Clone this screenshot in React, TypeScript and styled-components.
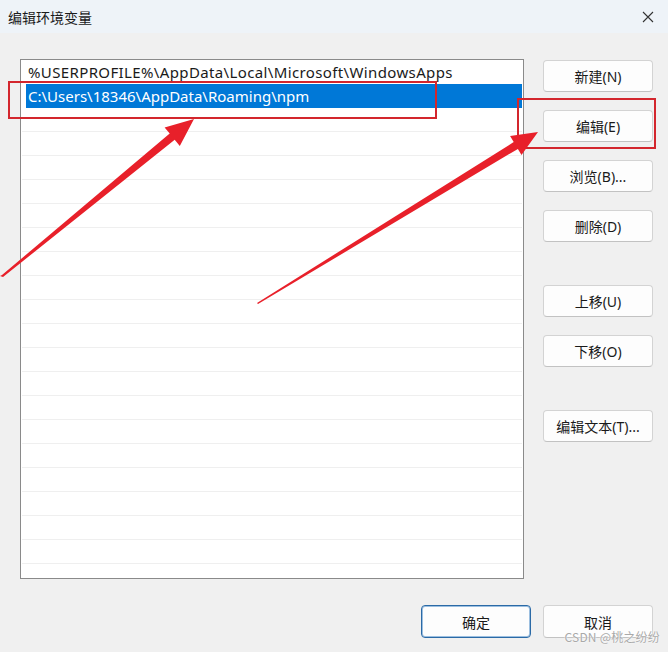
import React from "react";
import styled, { createGlobalStyle } from "styled-components";

const GlobalStyle = createGlobalStyle`
  html, body { margin: 0; padding: 0; background: #f0f0f0; }
  body { font-family: "Noto Sans", "Noto Sans CJK SC", sans-serif; }
  * { box-sizing: border-box; }
`;

const Window = styled.div`
  position: relative;
  width: 668px;
  height: 652px;
  background: #f0f0f0;
  display: flex;
  flex-direction: column;
  overflow: hidden;
`;

const TitleBar = styled.div`
  height: 33px;
  background: #eef3f8;
  display: flex;
  align-items: center;
  justify-content: space-between;
  padding: 0 14px 0 8px;
  font-family: "Noto Sans CJK SC", sans-serif;
  font-size: 14px;
  color: #1b1b1b;
`;

const Body = styled.div`
  flex: 1;
  display: flex;
  flex-direction: column;
  padding: 26px 15px 0 20px;
`;

const Main = styled.div`
  display: flex;
  gap: 19px;
`;

const ListBox = styled.div`
  width: 504px;
  height: 520px;
  border: 1px solid #8a8a8a;
  background: #ffffff;
  overflow: hidden;
  padding: 0 1px 0 5px;
`;

const Row = styled.div<{ $selected?: boolean; $empty?: boolean; $wide?: boolean }>`
  height: 24px;
  line-height: 24px;
  padding-left: 2px;
  font-size: 15px;
  white-space: nowrap;
  letter-spacing: ${(p) => (p.$wide ? "0.37px" : "0")};
  background: ${(p) => (p.$selected ? "#0078d7" : "transparent")};
  color: ${(p) => (p.$selected ? "#ffffff" : "#1a1a1a")};
  border-bottom: ${(p) => (p.$empty ? "1px solid #efefef" : "none")};
  margin-left: ${(p) => (p.$empty ? "-4px" : "0")};
`;

const ButtonColumn = styled.div`
  display: flex;
  flex-direction: column;
  padding-top: 1px;
`;

const Btn = styled.button<{ $gap?: number; $primary?: boolean }>`
  width: 110px;
  height: 32px;
  margin-top: ${(p) => p.$gap ?? 0}px;
  background: #fdfdfd;
  border: 1px solid ${(p) => (p.$primary ? "#2b6aa6" : "#d3d3d3")};
  border-bottom-color: ${(p) => (p.$primary ? "#2b6aa6" : "#c2c2c2")};
  border-radius: 4px;
  font-family: "Noto Sans", "Noto Sans CJK SC", sans-serif;
  font-size: 14px;
  color: #1a1a1a;
  padding: 0;
  box-shadow: ${(p) => (p.$primary ? "inset 0 0 0 1px #9cbfe0" : "none")};
`;

const Footer = styled.div`
  display: flex;
  justify-content: flex-end;
  gap: 12px;
  margin-top: 26px;
`;

const FooterBtn = styled(Btn)`
  height: 33px;
`;

const Overlay = styled.svg`
  position: absolute;
  left: 0;
  top: 0;
  pointer-events: none;
`;

const Watermark = styled.div`
  position: absolute;
  right: 8px;
  bottom: 7px;
  font-family: "Noto Sans CJK SC", sans-serif;
  font-size: 12px;
  color: #a9a9a9;
  text-shadow: 0 0 1px #ffffff, 0 0 2px #ffffff;
  letter-spacing: 0.2px;
`;

const emptyRows = Array.from({ length: 20 });

export default function App() {
  return (
    <>
      <GlobalStyle />
      <Window>
        <TitleBar>
          <span>编辑环境变量</span>
          <svg width="12" height="12" viewBox="0 0 12 12">
            <path d="M1 1 L11 11 M11 1 L1 11" stroke="#333" strokeWidth="1.1" />
          </svg>
        </TitleBar>
        <Body>
          <Main>
            <ListBox>
              <Row $wide>%USERPROFILE%\AppData\Local\Microsoft\WindowsApps</Row>
              <Row $selected>C:\Users\18346\AppData\Roaming\npm</Row>
              {emptyRows.map((_, i) => (
                <Row key={i} $empty />
              ))}
            </ListBox>
            <ButtonColumn>
              <Btn>新建(N)</Btn>
              <Btn $gap={18}>编辑(E)</Btn>
              <Btn $gap={18}>浏览(B)...</Btn>
              <Btn $gap={18}>删除(D)</Btn>
              <Btn $gap={43}>上移(U)</Btn>
              <Btn $gap={18}>下移(O)</Btn>
              <Btn $gap={43}>编辑文本(T)...</Btn>
            </ButtonColumn>
          </Main>
          <Footer>
            <FooterBtn $primary>确定</FooterBtn>
            <FooterBtn>取消</FooterBtn>
          </Footer>
        </Body>
        <Overlay width="668" height="652" viewBox="0 0 668 652">
          <rect x="9" y="82" width="427" height="36" fill="none" stroke="#d3262d" strokeWidth="2" />
          <rect x="518" y="99" width="137" height="49" fill="none" stroke="#d3262d" strokeWidth="2" />
          <polygon
            points="0,276 2,275 169.7,133.6 164.6,127.4 194,119 179.8,146 174.7,139.8 3,277"
            fill="#e8202a"
          />
          <polygon
            points="257,303 513.7,142.1 510.1,136.1 538,132 521.5,154.9 517.9,148.9 258,304"
            fill="#e8202a"
          />
        </Overlay>
        <Watermark>CSDN @桃之纷纷</Watermark>
      </Window>
    </>
  );
}
